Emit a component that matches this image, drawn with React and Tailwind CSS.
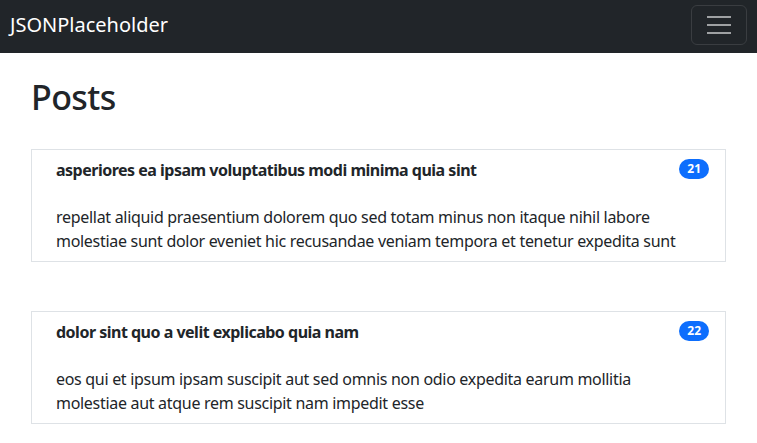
export default function App() {
  const posts = [
    {
      id: 21,
      title: "asperiores ea ipsam voluptatibus modi minima quia sint",
      body: "repellat aliquid praesentium dolorem quo sed totam minus non itaque nihil labore molestiae sunt dolor eveniet hic recusandae veniam tempora et tenetur expedita sunt",
    },
    {
      id: 22,
      title: "dolor sint quo a velit explicabo quia nam",
      body: "eos qui et ipsum ipsam suscipit aut sed omnis non odio expedita earum mollitia molestiae aut atque rem suscipit nam impedit esse",
    },
  ];
  return (
    <div className="min-h-screen bg-white text-[#212529] font-['Noto_Sans',sans-serif]">
      <nav className="h-[53px] bg-[#212529] flex items-start justify-between pl-[10px] pr-[10px]">
        <span className="mt-[10px] text-white text-[20px] leading-[30px]">JSONPlaceholder</span>
        <button className="mt-[5px] w-[56px] h-[40px] rounded-[6px] border border-[#3a3d41] flex flex-col items-center justify-center gap-[6px]">
          <span className="block w-[24px] h-[2px] bg-[#9fa1a3]" />
          <span className="block w-[24px] h-[2px] bg-[#9fa1a3]" />
          <span className="block w-[24px] h-[2px] bg-[#9fa1a3]" />
        </button>
      </nav>
      <main className="px-[31px] pt-[24px]">
        <h1 className="text-[34px] leading-[40px] font-medium tracking-[-0.6px] mb-[32px]">Posts</h1>
        <div className="flex flex-col gap-[49px]">
          {posts.map((p) => (
            <div key={p.id} className="border border-[#dee2e6] py-[8px] px-[16px] flex justify-between items-start">
              <div className="ml-[8px] mr-auto text-[16px] leading-[24px] tracking-[-0.3px]">
                <div className="font-bold tracking-[-0.5px]">{p.title}</div>
                <div className="mt-[23px]">{p.body}</div>
              </div>
              <span className="mt-[1px] bg-[#0d6efd] text-white text-[12px] font-bold leading-none rounded-full px-[8px] py-[4px]">
                {p.id}
              </span>
            </div>
          ))}
        </div>
      </main>
    </div>
  );
}
